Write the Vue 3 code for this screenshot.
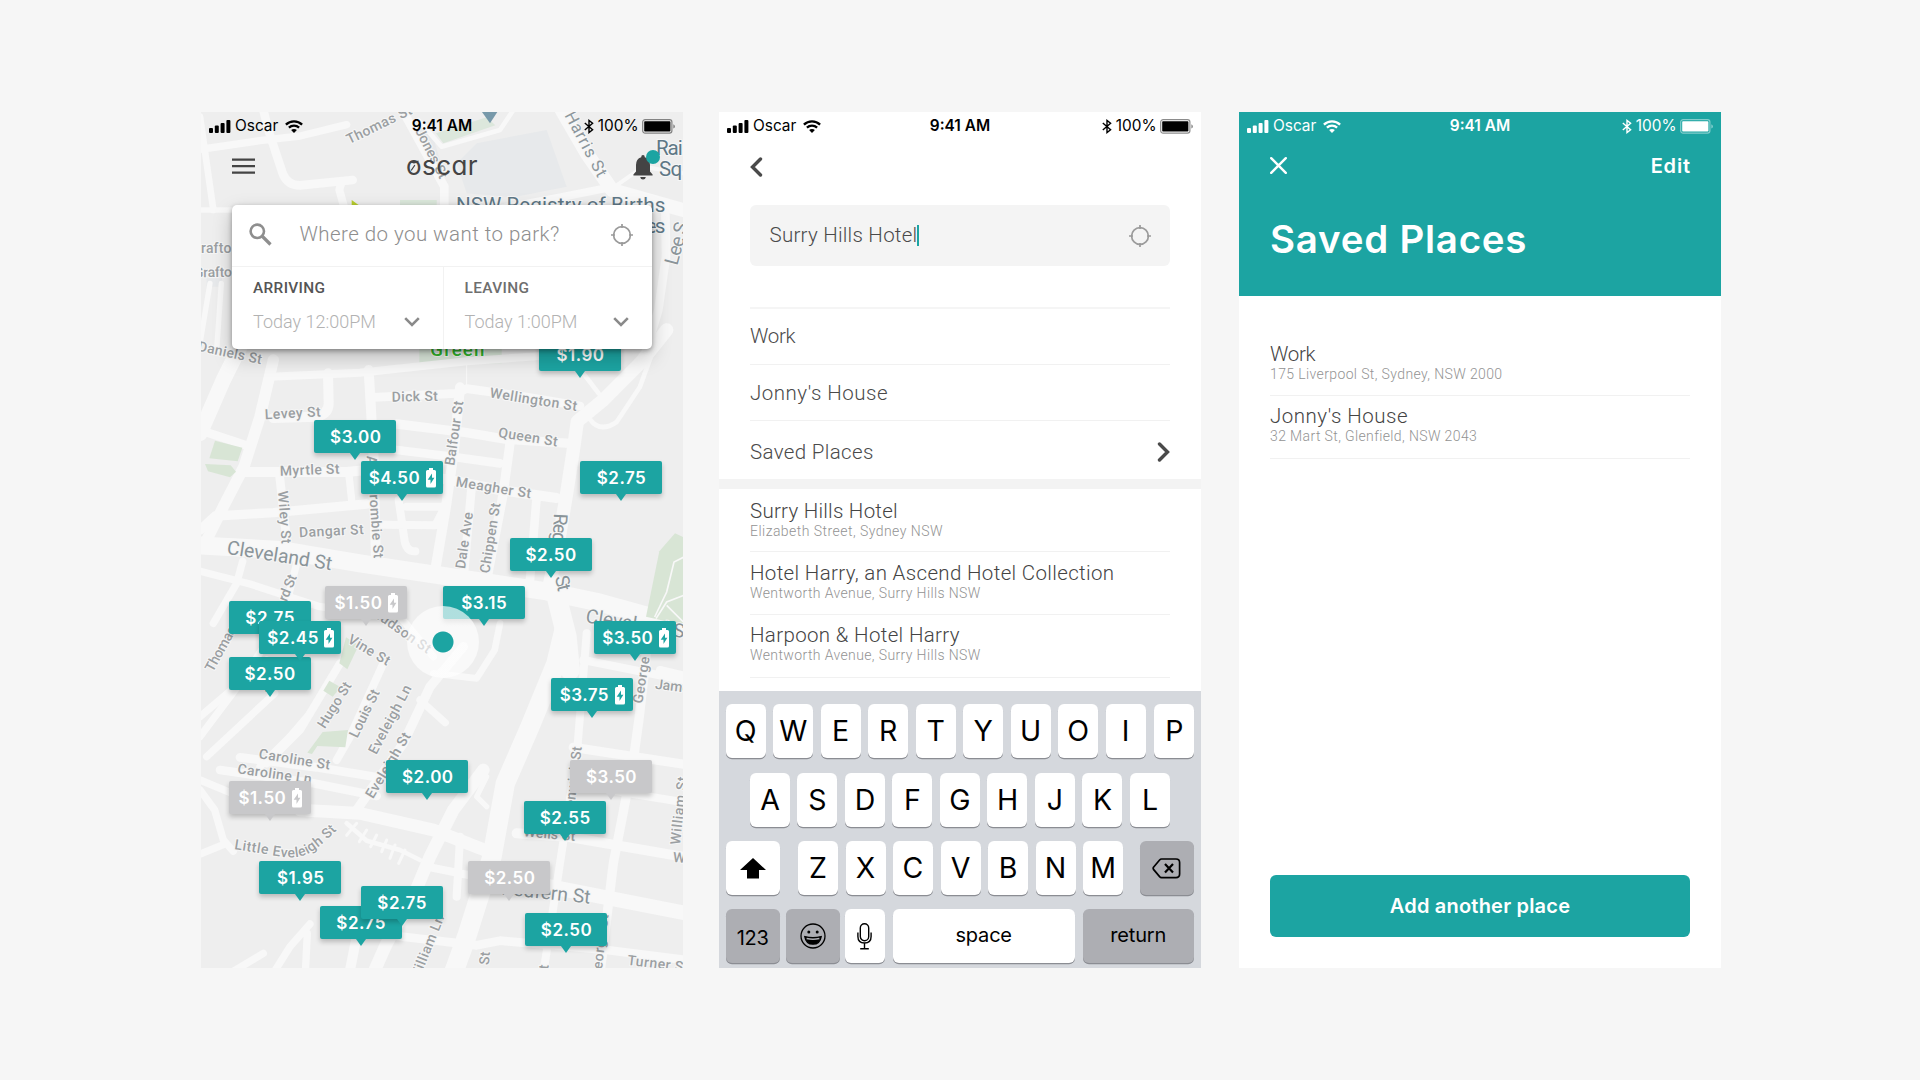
<script setup>
import { h } from 'vue'

const teal = '#1ca4a2'

const StatusBar = () =>
  h('div', { class: 'status' }, [
    h('div', { class: 'status-left' }, [
      h('svg', { width: 22, height: 13, viewBox: '0 0 22 13', fill: 'currentColor' }, [
        h('rect', { x: 0, y: 8, width: 4, height: 5, rx: 1 }),
        h('rect', { x: 5.8, y: 5.6, width: 4, height: 7.4, rx: 1 }),
        h('rect', { x: 11.6, y: 3, width: 4, height: 10, rx: 1 }),
        h('rect', { x: 17.4, y: 0, width: 4, height: 13, rx: 1 }),
      ]),
      h('span', { class: 'carrier' }, 'Oscar'),
      h('svg', { width: 18, height: 13, viewBox: '0 0 18 13', fill: 'none', stroke: 'currentColor', 'stroke-width': 2.3 }, [
        h('path', { d: 'M.9 4.6C5.4.2 12.6.2 17.1 4.6' }),
        h('path', { d: 'M3.9 7.7C6.8 5 11.2 5 14.1 7.7' }),
        h('path', { d: 'M9 12.9L6.1 10C7.7 8.5 10.3 8.5 11.9 10Z', fill: 'currentColor', stroke: 'none' }),
      ]),
    ]),
    h('span', { class: 'clock' }, '9:41 AM'),
    h('div', { class: 'status-right' }, [
      h('svg', { width: 10, height: 15, viewBox: '0 0 10 15', fill: 'none', stroke: 'currentColor', 'stroke-width': 1.4 }, [
        h('path', { d: 'M.8 4L8.6 10.8L5 13.6V1.4L8.6 4.2L.8 11' }),
      ]),
      h('span', { class: 'percent' }, '100%'),
      h('svg', { width: 34, height: 15, viewBox: '0 0 34 15' }, [
        h('rect', { x: 0.7, y: 0.7, width: 29.2, height: 13.4, rx: 2.4, fill: 'none', stroke: 'currentColor', 'stroke-opacity': 0.45, 'stroke-width': 1.2 }),
        h('rect', { x: 2.2, y: 2.2, width: 26.2, height: 10.4, rx: 0.8, fill: 'currentColor' }),
        h('path', { d: 'M31.3 5.2Q33 6 33 7.4T31.3 9.6Z', fill: 'currentColor', 'fill-opacity': 0.45 }),
      ]),
    ]),
  ])

const TargetIcon = () =>
  h('svg', { width: 22, height: 22, viewBox: '0 0 22 22', fill: 'none', stroke: '#9b9b9b', 'stroke-width': 1.7 }, [
    h('circle', { cx: 11, cy: 11, r: 8.4 }),
    h('path', { d: 'M11 0V4M11 18V22M0 11H4M18 11H22' }),
  ])

// Map geometry is stored in three vertical bands, each with its own origin.
const bands = { a: -6, b: 714, c: 1614 }

const roads = [
  ['a', 22, 'M0 118L180 92L300 78L440 44'],
  ['a', 26, 'M190 0L205 60L248 190Q262 226 300 226L458 210'],
  ['a', 20, 'M0 20L40 300'],
  ['a', 24, 'M425 215L418 240L432 290'],
  ['a', 26, 'M618 20L700 170L733 230V290'],
  ['a', 14, 'M655 30L725 110L900 60L940 0'],
  ['a', 16, 'M0 300L100 300'],
  ['a', 42, 'M1085 0L1160 130L1236 240L1450 300'],
  ['a', 24, 'M1230 232L1080 262L880 300'],
  ['a', 12, 'M1236 236L1330 170L1450 190'],
  ['a', 26, 'M1396 290L1398 440L1375 600L1330 750'],
  ['a', 16, 'M30 520L0 700M64 520L50 720'],
  ['b', 46, 'M120 -10L70 90L0 250'],
  ['b', 34, 'M220 30L180 200L132 350L70 470L10 590'],
  ['b', 26, 'M0 240L150 290'],
  ['b', 24, 'M210 80L480 68L800 34L1020 18'],
  ['b', 30, 'M384 70L386 160Q386 192 350 200L220 204'],
  ['b', 30, 'M506 60L520 300L528 640'],
  ['b', 26, 'M520 142L770 130L800 116L960 138L1140 168'],
  ['b', 3, 'M800 36V110'],
  ['b', 28, 'M590 222L800 248L920 268L1110 280'],
  ['b', 26, 'M590 300L740 318L900 340'],
  ['b', 30, 'M780 112L762 300L738 470L705 664'],
  ['b', 28, 'M930 280L908 440L860 690'],
  ['b', 26, 'M814 420L790 690'],
  ['b', 26, 'M1010 440L990 690'],
  ['b', 40, 'M1400 -60L1320 40L1210 150L1132 214L1120 300L1100 430L1078 560L1045 720'],
  ['b', 14, 'M1360 0L1320 110L1250 216Q1200 250 1170 208'],
  ['b', 14, 'M1150 70L1196 130'],
  ['b', 30, 'M132 366L440 366L500 360L740 388L900 420L1070 444'],
  ['b', 28, 'M0 540L46 498L220 488L500 462'],
  ['b', 26, 'M238 370L262 590'],
  ['b', 22, 'M446 366L456 460M440 466H480'],
  ['b', 24, 'M596 450L612 560Q616 606 646 604M550 524L706 526L735 470M620 470L730 470'],
  ['b', 54, 'M0 586L240 600L480 640L720 676L1040 724L1200 758L1460 830'],
  ['b', 22, 'M0 664L150 702L360 770L600 800L700 920'],
  ['b', 22, 'M128 634L110 700L40 820M290 640L250 800L120 1000L0 1160'],
  ['b', 60, 'M1060 700L1100 860L1110 960'],
  ['b', 20, 'M900 820L884 900L830 985L700 970'],
  ['b', 24, 'M1150 930L1450 990'],
  ['c', 58, 'M1092 -60L1068 40L990 230L916 400L876 620L800 860L760 970'],
  ['c', 24, 'M1160 -50L1130 320L1086 600L1030 970'],
  ['c', 28, 'M1340 0L1318 200L1300 330L1240 640L1200 970'],
  ['c', 28, 'M1120 292L1460 344'],
  ['c', 24, 'M1250 424L1460 458'],
  ['c', 30, 'M950 550L1100 560L1460 622'],
  ['c', 44, 'M880 680L1060 712L1460 790'],
  ['c', 26, 'M590 858L830 886L900 872L1220 900L1460 930'],
  ['c', 22, 'M200 30L0 200M224 130L20 320M330 190L270 260L180 350'],
  ['c', 24, 'M420 40L300 240L200 340M550 40L450 260L410 330'],
  ['c', 28, 'M790 -10L690 110L610 280L470 480'],
  ['c', 22, 'M660 150L736 218'],
  ['c', 26, 'M120 322L350 352L560 386'],
  ['c', 26, 'M60 360L340 400L530 438'],
  ['c', 38, 'M300 480L480 490L700 540L880 610'],
  ['c', 22, 'M0 390L120 440L330 490'],
  ['c', 22, 'M0 420L44 480L70 570L100 604M0 612L70 584'],
  ['c', 14, 'M440 520L500 572L600 600L660 630'],
  ['c', 9, 'M470 520L440 556M500 540L478 575M530 555L512 590M560 570L545 605M585 585L570 625M615 600L596 640'],
  ['c', 38, 'M850 360L760 480L690 620L640 740L560 880L520 970'],
  ['c', 24, 'M680 650L880 690M780 560L770 740'],
  ['c', 30, 'M450 960L468 870L540 800'],
  ['c', 22, 'M330 822L270 890L220 970M322 850L316 970M190 910L90 970'],
  ['c', 16, 'M860 380L830 440L860 470'],
  ['c', 24, 'M1380 60L1450 76'],
]

const blocks = [
  ['a', '#e7e9eb', 'M830 100L1040 60L1100 230L940 262L800 250L770 160Z'],
  ['a', '#e7e9eb', 'M655 60L690 50L735 200L700 200Z'],
  ['a', '#dce7dc', 'M708 70L860 22L886 46L730 100Z'],
  ['a', '#dce9dc', 'M600 270H710V290H600ZM658 715H905V760H658Z'],
  ['a', '#e7e9eb', 'M20 505H66V530H20Z'],
]

const parks = [
  ['b', 'M45 272L127 293L113 334L28 325Z'],
  ['b', 'M15 342L92 346L108 365L90 382L24 364Z'],
  ['b', 'M1425 550L1452 562V826L1338 800L1378 604Z'],
  ['c', 'M388 92L422 112L398 140L370 122Z'],
  ['c', 'M438 -38L476 -14L442 58L418 40Z'],
  ['c', 'M368 246L444 240L436 292L352 288L336 312L322 308Z'],
]

// band, text, x, y, rotation, width, style
const labels = [
  ['a', 'Thomas St', 448, 103, -26, 212],
  ['a', 'Jones St', 645, 62, 63, 165],
  ['a', 'Harris St', 1093, 16, 62, 214, 'mid'],
  ['a', 'Rai', 1368, 134, 0, 80, 'poi'],
  ['a', 'Sq', 1377, 197, 0, 70, 'poi'],
  ['a', 'NSW Registry of Births', 768, 307, 0, 628, 'poi'],
  ['a', 'es', 1338, 370, 0, 58, 'poi'],
  ['a', 'Grafto', -26, 430, 0, 120],
  ['a', 'Grafto', -18, 502, -1, 114],
  ['a', 'Lee S', 1432, 468, -75, 130, 'big'],
  ['b', 'Daniels St', -8, 2, 12, 195],
  ['b', 'Green', 691, 17, 0, 162, 'green'],
  ['b', 'Levey St', 195, 208, -3, 168],
  ['b', 'Dick St', 575, 155, -1, 139],
  ['b', 'Wellington St', 868, 142, 9, 264],
  ['b', 'Queen St', 893, 261, 9, 180],
  ['b', 'Balfour St', 763, 348, -82, 195],
  ['b', 'Myrtle St', 240, 377, -2, 179],
  ['b', 'Wiley St', 234, 424, 86, 158],
  ['b', 'Abercrombie St', 500, 318, 86, 308],
  ['b', 'Dangar St', 298, 562, -3, 194],
  ['b', 'Cleveland St', 79, 611, 9, 318, 'big'],
  ['b', 'Meagher St', 766, 409, 9, 228],
  ['b', 'Dale Ave', 795, 658, -82, 171],
  ['b', 'Chippen St', 868, 671, -81, 213],
  ['b', 'Regen', 1062, 490, 93, 140, 'big'],
  ['b', 'St', 1064, 682, 76, 46, 'big'],
  ['b', 'rd St', 260, 757, -68, 82],
  ['b', 'Shep', 202, 1030, -60, 88],
  ['b', 'Thomas St', 38, 968, -61, 195],
  ['b', 'Hudson St', 513, 794, 35, 205],
  ['b', 'Vine St', 440, 876, 31, 140],
  ['b', 'Cleveland St', 1155, 817, 9, 318, 'big'],
  ['c', 'Hugo St', 374, 238, -58, 155],
  ['c', 'Louis St', 472, 266, -64, 155],
  ['c', 'Eveleigh Ln', 529, 316, -62, 228],
  ['c', 'Eveleigh St', 519, 448, -59, 222],
  ['c', 'Caroline St', 175, 325, 9, 216],
  ['c', 'Caroline Ln', 111, 370, 8, 224],
  ['c', 'William Ln', 655, 995, -68, 208],
  ['c', 'St', 866, 946, -84, 40],
  ['c', 'St', 1042, 985, -84, 40],
  ['c', 'Redfern St', 903, 733, 6, 268, 'big'],
  ['c', 'George St', 1202, 988, -83, 195],
  ['c', 'George St', 1327, 162, -81, 195],
  ['c', 'Renwick St', 1120, 500, -83, 210],
  ['c', 'Wells St', 970, 559, 5, 155],
  ['c', 'James St', 1364, 116, 7, 176],
  ['c', 'Turner St', 1281, 944, 7, 184],
  ['c', 'William St', 1440, 585, -84, 205],
  ['c', 'W', 1418, 636, 4, 36],
]

const pins = [
  ['$1.90', 338, 226],
  ['$3.00', 113.3, 308.3],
  ['$4.50', 159.7, 349.3, 'ev'],
  ['$2.75', 379, 349.3],
  ['$2.50', 308.6, 426.3],
  ['$3.15', 241.7, 474],
  ['$1.50', 123.7, 474, 'ev off'],
  ['$2.75', 27.6, 489],
  ['$2.50', 27.6, 545.3],
  ['$2.45', 58.3, 509.3, 'ev'],
  ['$3.50', 393, 509.3, 'ev'],
  ['$3.75', 349.6, 566, 'ev'],
  ['$3.50', 369, 648, 'off'],
  ['$2.00', 185.3, 648],
  ['$1.50', 27.6, 669, 'ev off'],
  ['$2.55', 322.7, 689],
  ['$2.50', 267.3, 749.3, 'off'],
  ['$1.95', 58.3, 749.3],
  ['$2.75', 118.6, 794],
  ['$2.75', 159.6, 774],
  ['$2.50', 324, 801],
].map(([price, x, y, flags = '']) => ({ price, x, y, ev: flags.includes('ev'), off: flags.includes('off') }))

const results = [
  ['Surry Hills Hotel', 'Elizabeth Street, Sydney NSW'],
  ['Hotel Harry, an Ascend Hotel Collection', 'Wentworth Avenue, Surry Hills NSW'],
  ['Harpoon & Hotel Harry', 'Wentworth Avenue, Surry Hills NSW'],
]

const places = [
  ['Work', '175 Liverpool St, Sydney, NSW 2000'],
  ['Jonny\'s House', '32 Mart St, Glenfield, NSW 2043'],
]
</script>

<template>
  <main class="board">
    <section class="phone map-phone">
      <div class="map">
        <svg width="482" height="856" viewBox="3 0 1446 2568">
          <rect x="0" width="1460" height="2568" fill="#eeeeee" />
          <path v-for="(a, i) in blocks" :key="'a' + i" :d="a[2]" :fill="a[1]" :transform="`translate(0 ${bands[a[0]]})`" />
          <g fill="none" stroke="#f8f8f8" stroke-linejoin="round" stroke-linecap="round">
            <path v-for="(r, i) in roads" :key="'r' + i" :d="r[2]" :stroke-width="r[1]" :transform="`translate(0 ${bands[r[0]]})`" />
          </g>
          <path v-for="(p, i) in parks" :key="'p' + i" :d="p[1]" fill="#d8e5d5" :transform="`translate(0 ${bands[p[0]]})`" />
          <path d="M1452 1335L1422 1350L1400 1440L1364 1515M1452 1450L1400 1470L1368 1520M1400 1480L1450 1530" fill="none" stroke="#f8f8f8" stroke-width="5" />
          <path d="M846 0H892L870 34Z" fill="#7799aa" />
          <path d="M455 264L480 282H455Z" fill="#b9cf2e" />
          <text
            v-for="(l, i) in labels"
            :key="'l' + i"
            :class="['street', l[6]]"
            :transform="`translate(${l[2]} ${l[3] + bands[l[0]]}) rotate(${l[4]})`"
            :textLength="l[5]"
          >{{ l[1] }}</text>
          <path id="eveleigh-curve" d="M102 2211L190 2225C260 2239 300 2244 340 2216C370 2194 392 2174 440 2124" fill="none" />
          <text class="street"><textPath href="#eveleigh-curve" textLength="338">Little Eveleigh St</textPath></text>
        </svg>
        <div v-for="(p, i) in pins" :key="i" class="pin" :class="{ off: p.off }" :style="{ left: p.x + 'px', top: p.y + 'px' }">
          <span>{{ p.price }}</span>
          <svg v-if="p.ev" width="10" height="20" viewBox="0 0 10 20">
            <path d="M3 0H7V2H8.500Q10 2 10 3.500V18Q10 19.500 8.500 19.500H1.500Q0 19.500 0 18V3.500Q0 2 1.500 2H3Z" fill="#fff" />
            <path d="M6 5.500L1.700 11.800H4.500V16L8.400 9.700H6Z" :fill="p.off ? '#c8c8ca' : teal" />
          </svg>
        </div>
        <div class="here"></div>
      </div>

      <div class="overlay">
        <StatusBar />
        <header class="topbar">
          <svg width="23" height="16" viewBox="0 0 23 16" stroke="#444" stroke-width="2.3"><path d="M0 1.600H23M0 8.100H23M0 14.600H23" /></svg>
          <div class="logo">
            <span>oscar</span>
            <svg width="14" height="18" viewBox="0 0 14 18" fill="none" stroke="#444" stroke-width="1.300"><path d="M5.500 15L8.600 10.500M5 7Q8.500 8.800 12 6.200" stroke-linecap="round" /></svg>
          </div>
          <div class="bell">
            <svg width="20" height="25" viewBox="0 0 20 25" fill="#444">
              <path d="M10 0Q11.800 0 11.800 2.200Q17 3.800 17 10V16.500L19.600 19.500V20.600H.4V19.500L3 16.500V10Q3 3.800 8.200 2.200Q8.200 0 10 0Z" />
              <path d="M7.200 22H12.800Q12.400 24.600 10 24.600T7.200 22Z" />
            </svg>
            <i class="dot"></i>
          </div>
        </header>

        <div class="card">
          <div class="card-search">
            <svg width="23" height="23" viewBox="0 0 23 23" fill="none" stroke="#8e8e8e"><circle cx="8.300" cy="8.300" r="6.700" stroke-width="2.600" /><path d="M13 13L21.500 21.500" stroke-width="3.200" /></svg>
            <span class="ask">Where do you want to park?</span>
            <TargetIcon />
          </div>
          <div class="card-times">
            <div class="time">
              <b class="arriving">ARRIVING</b>
              <div class="time-row">
                <span>Today 12:00PM</span>
                <svg width="16" height="10" viewBox="0 0 16 10" fill="none" stroke="#8a8a8a" stroke-width="2.600"><path d="M1.200 1.200L8 8L14.800 1.200" /></svg>
              </div>
            </div>
            <div class="time">
              <b class="leaving">LEAVING</b>
              <div class="time-row">
                <span>Today 1:00PM</span>
                <svg width="16" height="10" viewBox="0 0 16 10" fill="none" stroke="#8a8a8a" stroke-width="2.600"><path d="M1.200 1.200L8 8L14.800 1.200" /></svg>
              </div>
            </div>
          </div>
        </div>
      </div>
    </section>

    <section class="phone search-phone">
      <StatusBar />
      <header class="backbar">
        <svg width="13" height="20" viewBox="0 0 13 20" fill="none" stroke="#4a4a4a" stroke-width="3.400" stroke-linecap="round"><path d="M10.500 2L2.500 10L10.500 18" /></svg>
      </header>
      <div class="field">
        <span class="field-text">Surry Hills Hotel</span><i class="caret"></i>
        <TargetIcon />
      </div>
      <ul class="quick">
        <li class="q-work">Work</li>
        <li class="q-house">Jonny's House</li>
        <li>
          Saved Places
          <svg width="13" height="20" viewBox="0 0 13 20" fill="none" stroke="#4a4a4a" stroke-width="3.400" stroke-linecap="round"><path d="M2.500 2L10.500 10L2.500 18" /></svg>
        </li>
      </ul>
      <ul class="entries results">
        <li v-for="(r, i) in results" :key="r[0]" :class="'r' + i"><span>{{ r[0] }}</span><small>{{ r[1] }}</small></li>
      </ul>
      <div class="keyboard">
        <div class="row top"><kbd v-for="k in 'QWERTYUOIP'" :key="k">{{ k }}</kbd></div>
        <div class="row middle"><kbd v-for="k in 'ASDFGHJKL'" :key="k">{{ k }}</kbd></div>
        <div class="row spread">
          <kbd class="wide">
            <svg width="26" height="21" viewBox="0 0 26 21"><path d="M13 0L26 12H19V20.500H7V12H0Z" /></svg>
          </kbd>
          <div class="letters"><kbd v-for="k in 'ZXCVBNM'" :key="k">{{ k }}</kbd></div>
          <kbd class="wide grey erase">
            <svg width="29" height="21" viewBox="0 0 29 21" fill="none" stroke="#000" stroke-width="1.700"><path d="M9.500 1H24Q27.600 1 27.600 4.600V16Q27.600 19.600 24 19.600H9.500Q8.500 19.600 7.600 18.600L1.500 11.400Q.8 10.300 1.500 9.200L7.600 2Q8.500 1 9.500 1Z" /><path d="M13 6L21 14.600M21 6L13 14.600" stroke-width="2.200" /></svg>
          </kbd>
        </div>
        <div class="row">
          <kbd class="wide grey word num">123</kbd>
          <kbd class="wide grey emoji">
            <svg width="26" height="26" viewBox="0 0 26 26" fill="none" stroke="#000" stroke-width="1.300"><circle cx="13" cy="13" r="12" /><circle cx="8.800" cy="9" r="1.500" fill="#000" stroke="none" /><circle cx="17.200" cy="9" r="1.500" fill="#000" stroke="none" /><path d="M4.800 13.600Q13 15.600 21.200 13.600Q20 21.200 13 21.200T4.800 13.600Z" fill="#000" /><path d="M6.600 15.400Q13 17 19.400 15.400" stroke="#adaeb3" stroke-width="1.500" /></svg>
          </kbd>
          <kbd class="mic">
            <svg width="15" height="27" viewBox="0 0 15 27" fill="none" stroke="#000" stroke-width="1.400"><rect x="3.300" y=".8" width="8.400" height="17" rx="4.200" /><path d="M.9 9.500V13.500Q.9 20 7.500 20T14.100 13.500V9.500M7.500 20V25.600M3.200 25.700H11.800" /></svg>
          </kbd>
          <kbd class="word space">space</kbd>
          <kbd class="word grey return">return</kbd>
        </div>
      </div>
    </section>

    <section class="phone saved-phone">
      <div class="saved-head">
        <StatusBar />
        <header class="closebar">
          <svg width="17" height="17" viewBox="0 0 17 17" stroke="#fff" stroke-width="2.400" stroke-linecap="round"><path d="M1.200 1.200L15.800 15.800M15.800 1.200L1.200 15.800" /></svg>
          <span>Edit</span>
        </header>
        <h1>Saved Places</h1>
      </div>
      <ul class="entries saved">
        <li v-for="(p, i) in places" :key="p[0]" :class="'p' + i"><span>{{ p[0] }}</span><small>{{ p[1] }}</small></li>
      </ul>
      <button>Add another place</button>
    </section>
  </main>
</template>

<style>
html, body { margin: 0; background: #f6f6f6; }
.status {
  display: grid;
  grid-template-columns: 1fr auto 1fr;
  align-items: center;
  height: 28px;
  padding: 0 7px 0 8px;
  font: 400 15.4px/28px Inter, "Liberation Sans", sans-serif;
}
.status-left, .status-right { display: flex; align-items: center; }
.status-right { justify-content: flex-end; }
.carrier { margin: 0 7px 0 4px; }
.clock { font-weight: 600; margin-right: 1px; }
.percent { margin: 0 3.500px 0 4px; }
</style>

<style scoped>
.board {
  display: flex;
  box-sizing: border-box;
  width: 1920px;
  height: 1080px;
  padding: 112px 0 0 201px;
  background: #f6f6f6;
  font-family: Roboto, "Liberation Sans", sans-serif;
  color: #4a4a4a;
}
.phone {
  flex: none;
  display: flex;
  flex-direction: column;
  width: 482px;
  height: 856px;
  background: #fff;
  overflow: hidden;
}
.map-phone { position: relative; margin-right: 36px; }
.search-phone { margin-right: 38px; color: #000; }
ul { list-style: none; margin: 0; padding: 0; }

.map { position: absolute; inset: 0; }
.map > svg { display: block; }
.street {
  font: 500 42px Roboto, sans-serif;
  fill: #9b9fa2;
  stroke: #f6f6f6;
  stroke-width: 6px;
  paint-order: stroke;
}
.mid { font-size: 50px; font-weight: 400; fill: #8c969c; }
.big { font-size: 58px; font-weight: 400; fill: #8a9499; }
.poi { font-size: 62px; font-weight: 400; fill: #5f7886; }
.green { font-size: 56px; fill: #30b52b; }

.pin {
  position: absolute;
  display: flex;
  align-items: center;
  justify-content: center;
  gap: 5.500px;
  width: 82px;
  height: 33px;
  border-radius: 2px;
  background: #1ca4a2;
  box-shadow: 0 3px 5px rgba(0, 0, 0, .22);
  color: #fff;
  font: 600 17px/35px Inter, sans-serif;
  letter-spacing: .5px;
}
.pin span { padding: 1px 0 0 1px; }
.pin::after {
  content: "";
  position: absolute;
  left: 36px;
  top: 33px;
  border: 5px solid transparent;
  border-top: 7px solid #1ca4a2;
  border-bottom: 0;
}
.pin.off { background: #c8c8ca; }
.pin.off::after { border-top-color: #c8c8ca; }
.here {
  position: absolute;
  left: 205.500px;
  top: 494px;
  width: 72px;
  height: 72px;
  border-radius: 50%;
  background: radial-gradient(circle, #1ca4a2 10px, rgba(255, 255, 255, .65) 11px);
}

.overlay { position: relative; color: #000; }
.topbar {
  display: flex;
  align-items: center;
  justify-content: space-between;
  height: 52px;
  padding: 0 30px 0 31px;
}
.logo {
  position: relative;
  left: -2px;
  font: 400 26px/30px Inter, sans-serif;
  font-feature-settings: "cv11";
  color: #444;
  letter-spacing: .4px;
}
.logo svg { position: absolute; left: 0; top: 4px; }
.bell { position: relative; height: 25px; top: 1px; }
.dot {
  position: absolute;
  left: 12.500px;
  top: -5px;
  width: 14px;
  height: 14px;
  border-radius: 50%;
  background: #1ca4a2;
}
.card {
  width: 420px;
  height: 144px;
  margin: 13px 0 0 31px;
  border-radius: 5px;
  background: #fff;
  box-shadow: 0 2px 5px rgba(0, 0, 0, .35), 0 8px 20px rgba(0, 0, 0, .22);
}
.card-search {
  display: flex;
  align-items: center;
  box-sizing: border-box;
  height: 62px;
  padding: 0 19px 2px 16.500px;
  border-bottom: 1.5px solid #f2f2f2;
}
.ask { flex: 1; margin: 0 0 2px 28px; font-size: 20.500px; font-weight: 300; letter-spacing: .45px; white-space: nowrap; color: #8e8e8e; }
.card-times { display: flex; height: 82px; }
.time { box-sizing: border-box; width: 212px; padding: 12px 23px 0 21px; border-right: 1.500px solid #f2f2f2; }
.time:last-child { width: 208px; border: 0; padding-left: 20.500px; }
.time b { display: block; font-size: 15.400px; line-height: 18px; font-weight: 500; letter-spacing: .35px; }
.arriving { color: #555; }
.leaving { color: #6e6e6e; }
.time-row { display: flex; align-items: center; justify-content: space-between; margin-top: 14px; font-size: 18px; line-height: 22px; font-weight: 300; color: #b2b2b2; }

.backbar { height: 65px; padding: 17px 31px 0; box-sizing: border-box; }
.field {
  display: flex;
  align-items: center;
  box-sizing: border-box;
  width: 420px;
  height: 61px;
  margin-left: 31px;
  padding: 0 19px 0 19.500px;
  border-radius: 6px;
  background: #f4f4f4;
  color: #4a4a4a;
  font-size: 20.500px;
  font-weight: 300;
}
.field-text { margin-bottom: 2px; letter-spacing: .25px; }
.caret { width: 1.500px; height: 21px; margin-right: auto; background: #1ca4a2; }
.quick {
  margin: 41px 31px 0;
  border-top: 2px solid #f5f5f5;
  color: #4a4a4a;
  font-size: 20.500px;
  font-weight: 300;
  letter-spacing: .35px;
}
.quick li { display: flex; align-items: center; justify-content: space-between; box-sizing: border-box; height: 56px; border-bottom: 1px solid #f1f1f1; }
.quick .q-work { padding-bottom: 2px; letter-spacing: -.3px; }
.quick .q-house { letter-spacing: .5px; }
.quick li:last-child { height: 58px; padding-top: 3px; border: 0; }
.entries li { display: flex; flex-direction: column; box-sizing: border-box; height: 63px; border-bottom: 1px solid #f1f1f1; }
.entries span { font-size: 20.500px; line-height: 24px; font-weight: 300; letter-spacing: .34px; color: #444; }
.entries small { font-size: 14px; line-height: 16px; font-weight: 300; letter-spacing: .38px; color: #939393; }
.results { flex: 1; padding: 0 31px; border-top: 10px solid #f3f3f3; }
.results li { padding-top: 10px; }
.results .r0 span { letter-spacing: .25px; }
.results .r0 small { letter-spacing: .46px; }
.results .r1 { padding-top: 9px; }
.results .r2 { padding-top: 8px; }

.keyboard { box-sizing: border-box; height: 277px; padding: 13px 6.700px 0 6.700px; background: #d5d8dd; }
.row { display: flex; height: 54px; margin-bottom: 14px; }
.row.spread { justify-content: space-between; }
.row:first-child { margin-bottom: 15px; }
.top, .middle, .letters { gap: 7.500px; }
.top kbd:last-child { margin-left: auto; }
.middle { padding-left: 24.300px; }
.letters { display: flex; margin-left: 1px; }
kbd {
  display: flex;
  align-items: center;
  justify-content: center;
  box-sizing: border-box;
  width: 40px;
  height: 54px;
  border-radius: 6px;
  background: #fff;
  box-shadow: 0 1.300px 0 #8b8d93;
  color: #000;
  font: 400 28.500px/54px Inter, sans-serif;
}
.wide { width: 54px; }
.grey { background: #adaeb3; }
.erase { padding-right: 2px; }
.word { font-size: 20px; letter-spacing: -.2px; }
.num { padding-top: 3px; }
.emoji { margin-left: 6px; }
.mic { margin-left: 5px; }
.space { width: 182px; margin-left: 8px; padding-bottom: 2px; }
.return { width: 111px; margin-left: 8px; padding-bottom: 2px; }

.saved-head { height: 184px; background: #1ca4a2; color: #fff; }
.closebar { display: flex; align-items: center; justify-content: space-between; height: 51px; padding: 0 31px; font: 600 20px/24px Inter, sans-serif; }
.closebar span { margin-right: -.8px; letter-spacing: .8px; }
h1 { margin: 24px 0 0 31px; font: 600 38.500px/48px Inter, sans-serif; letter-spacing: .75px; white-space: nowrap; }
.saved { flex: 1; padding: 37px 31px 0; }
.saved li { padding-top: 9px; }
.saved .p0 span { letter-spacing: -.3px; }
.saved .p1 { padding-top: 8px; }
.saved .p1 span { letter-spacing: .5px; }
button {
  width: 420px;
  height: 62px;
  margin: 0 0 31px 31px;
  padding: 0;
  border: 0;
  border-radius: 6px;
  background: #1ca4a2;
  color: #fff;
  font: 600 20px/62px Inter, sans-serif;
  letter-spacing: .2px;
}
</style>
